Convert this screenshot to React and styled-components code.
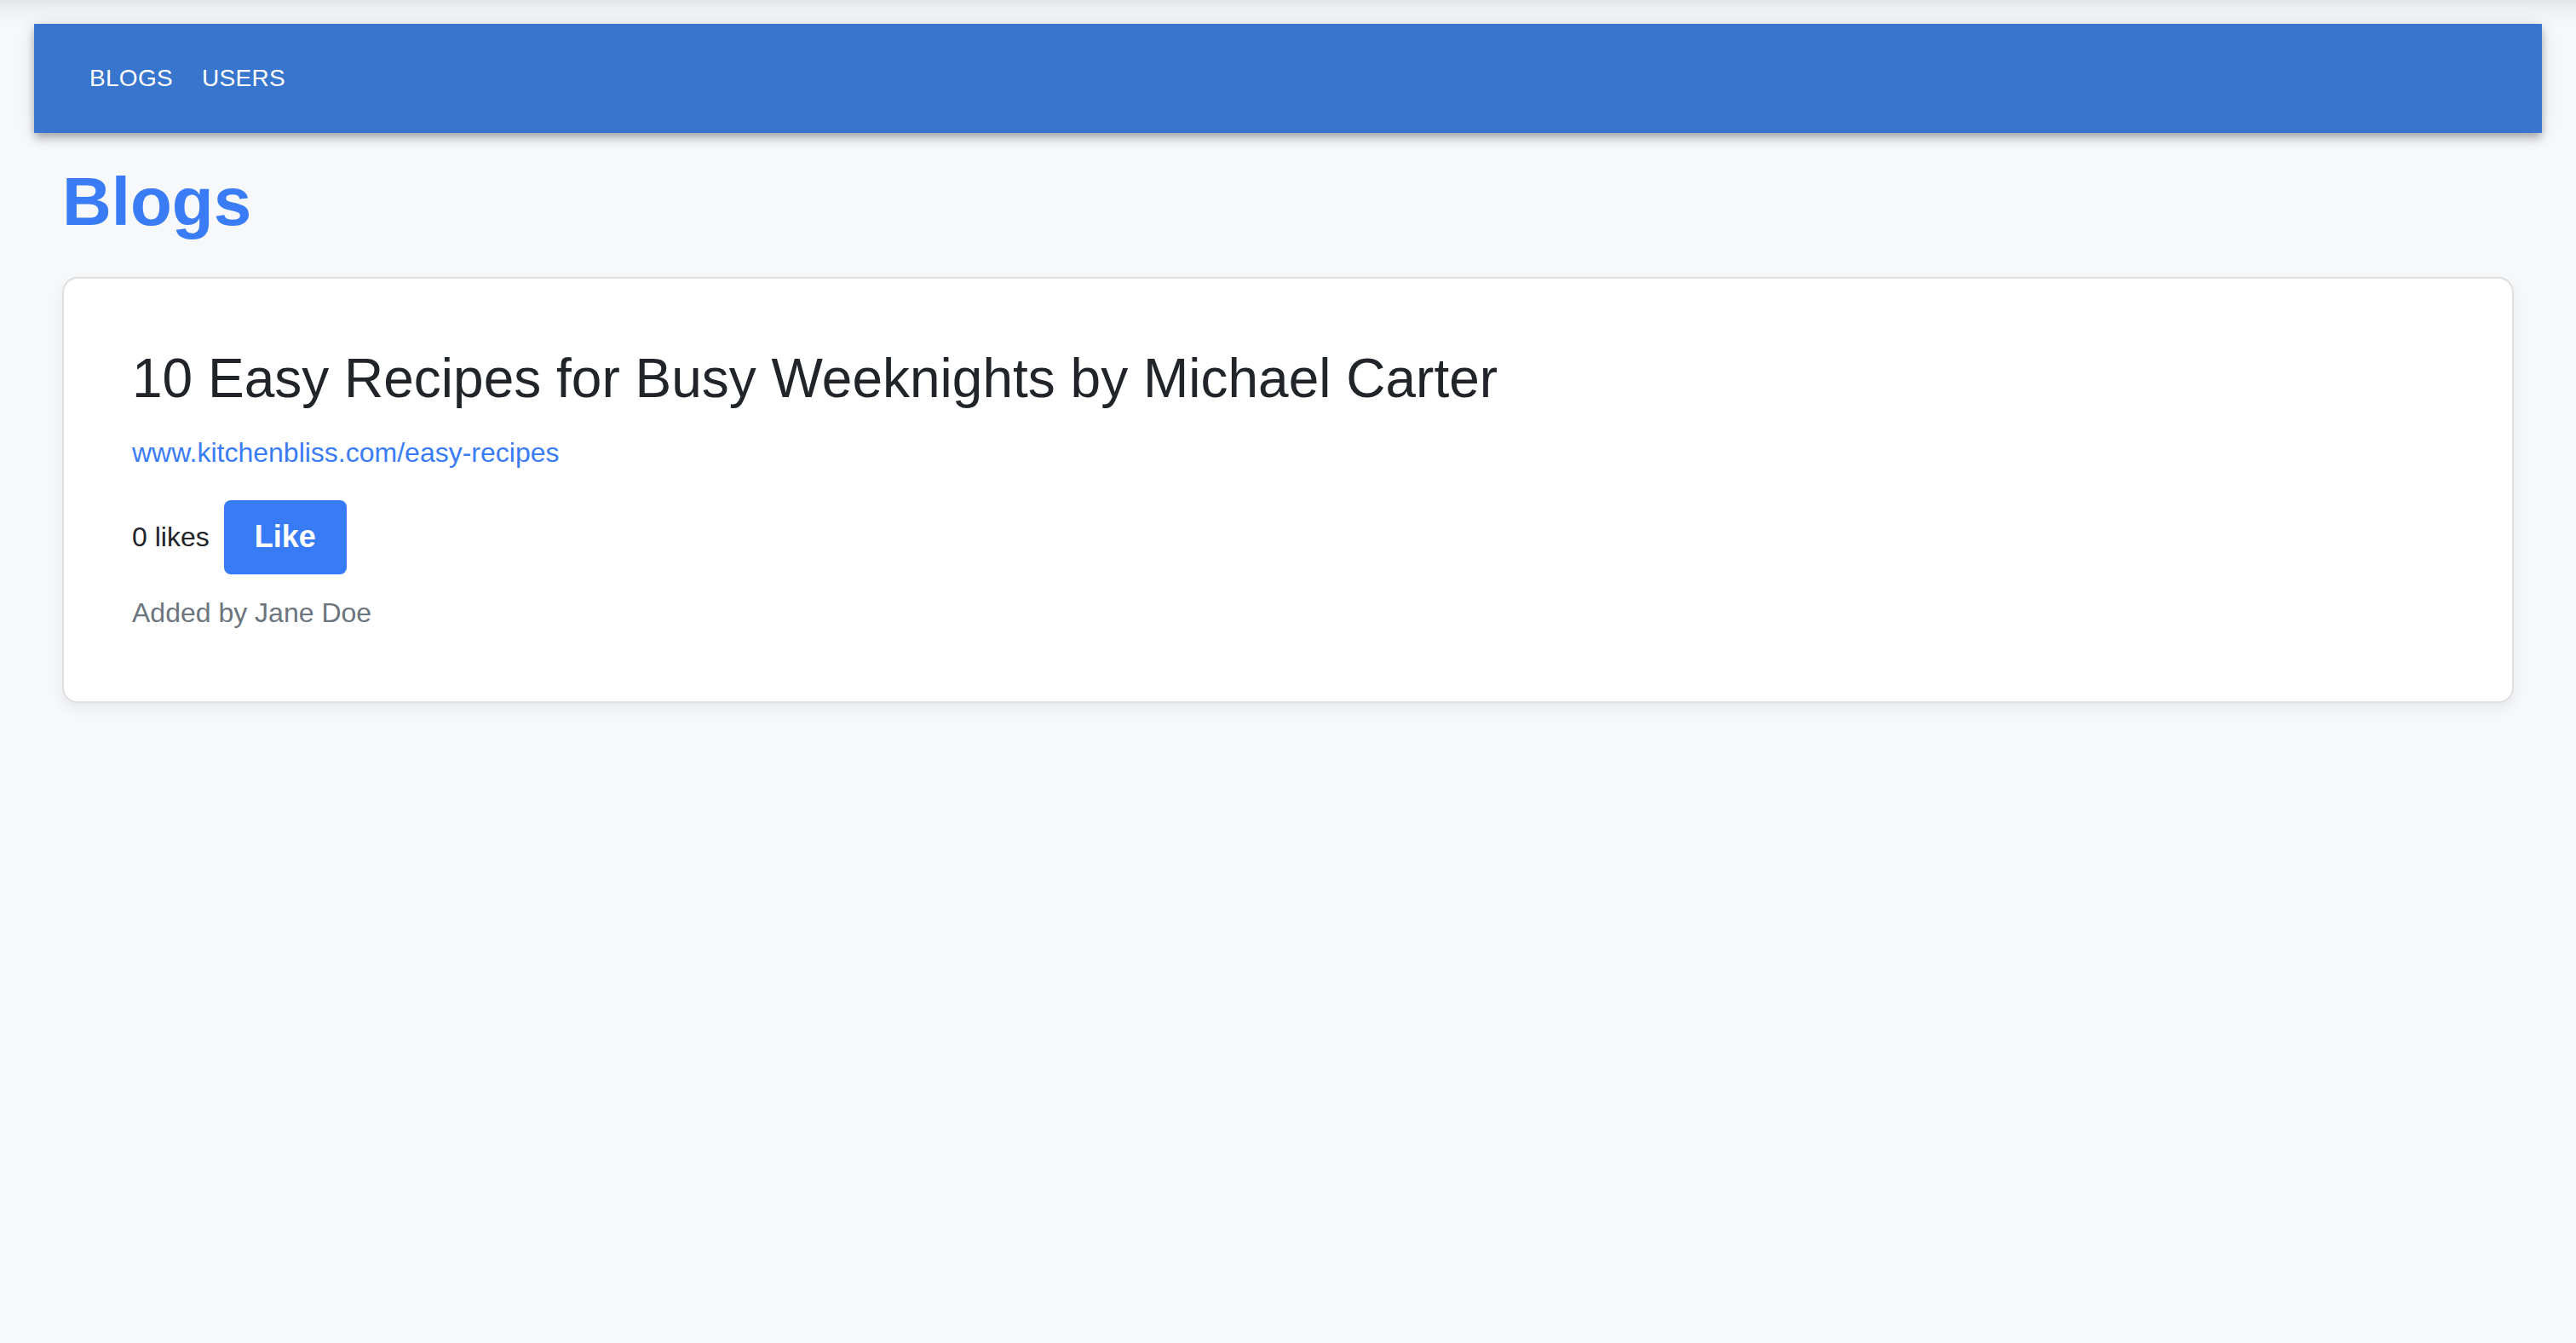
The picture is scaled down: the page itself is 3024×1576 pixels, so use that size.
import React from 'react'
import styled, { createGlobalStyle } from 'styled-components'

const GlobalStyle = createGlobalStyle`
  html, body {
    margin: 0;
    padding: 0;
  }
  body {
    min-height: 100vh;
    font-family: "Liberation Sans", Arial, sans-serif;
    background: linear-gradient(to bottom, #e3e4e6 0px, #eeeff1 10px, #f4f5f7 22px, #f7f8fa 34px) no-repeat, #f7f8fa;
  }
`

const Page = styled.div`
  padding: 28px 40px 0;
`

const NavBar = styled.nav`
  height: 128px;
  display: flex;
  align-items: center;
  gap: 34px;
  padding: 0 65px;
  background: #3875cc;
  box-shadow: 0 4px 8px -2px rgba(0,0,0,0.2), 0 8px 10px 0 rgba(0,0,0,0.14), 0 2px 20px 0 rgba(0,0,0,0.12);
`

const NavLink = styled.a`
  color: #ffffff;
  font-size: 28px;
  text-transform: uppercase;
  text-decoration: none;
  letter-spacing: 0.3px;
  cursor: pointer;
`

const Content = styled.main`
  padding: 0 33px;
`

const PageTitle = styled.h1`
  margin: 36px 0 43px;
  font-size: 80px;
  line-height: 90px;
  font-weight: 700;
  color: #3a7cf6;
`

const Card = styled.article`
  background: #ffffff;
  border: 2px solid #dedfe1;
  border-radius: 18px;
  padding: 79px 80px 80px;
  box-shadow: 0 6px 16px rgba(0,0,0,0.07);
`

const BlogTitle = styled.h2`
  margin: 0 0 24px;
  font-size: 64px;
  line-height: 1.2;
  font-weight: 400;
  color: #212529;
`

const BlogLink = styled.a`
  display: block;
  margin-bottom: 32px;
  font-size: 32px;
  line-height: 48px;
  color: #3a7cf6;
  text-decoration: none;
`

const LikeRow = styled.div`
  display: flex;
  align-items: center;
  gap: 17px;
  margin-bottom: 21px;
`

const LikeCount = styled.span`
  font-size: 32px;
  line-height: 48px;
  color: #212529;
`

const LikeButton = styled.button`
  border: 0;
  border-radius: 8px;
  padding: 16px 36px 17px;
  background: #387bf6;
  color: #ffffff;
  font-family: "Liberation Sans", Arial, sans-serif;
  font-size: 36px;
  line-height: 54px;
  font-weight: 700;
  cursor: pointer;
`

const AddedBy = styled.div`
  font-size: 32px;
  line-height: 48px;
  color: #6c757d;
`

const App = () => {
  return (
    <>
      <GlobalStyle />
      <Page>
        <NavBar>
          <NavLink>Blogs</NavLink>
          <NavLink>Users</NavLink>
        </NavBar>
        <Content>
          <PageTitle>Blogs</PageTitle>
          <Card>
            <BlogTitle>10 Easy Recipes for Busy Weeknights by Michael Carter</BlogTitle>
            <BlogLink href="#">www.kitchenbliss.com/easy-recipes</BlogLink>
            <LikeRow>
              <LikeCount>0 likes</LikeCount>
              <LikeButton>Like</LikeButton>
            </LikeRow>
            <AddedBy>Added by Jane Doe</AddedBy>
          </Card>
        </Content>
      </Page>
    </>
  )
}

export default App
